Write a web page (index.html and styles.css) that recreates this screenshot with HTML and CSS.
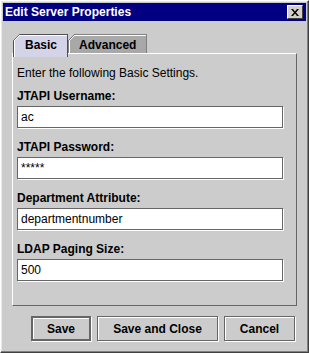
FILE: index.html
```html
<!DOCTYPE html>
<html lang="en-US">
<head>
	<meta charset="UTF-8">
	<title>Edit Server Properties</title>
	<link rel="stylesheet" href="styles.css">
</head>
<body>
	<div class="window">
		<div class="titlebar">
			<span class="title">Edit Server Properties</span>
			<span class="close-btn">
				<svg width="8" height="7" viewBox="0 0 8 7">
					<path d="M0 0 H2 L4 2.5 L6 0 H8 L5 3.5 L8 7 H6 L4 4.5 L2 7 H0 L3 3.5 Z" fill="#000"/>
				</svg>
			</span>
		</div>

		<div class="content">
			<div class="tabs">
				<div class="tab active">Basic</div>
				<div class="tab">Advanced</div>
			</div>

			<div class="panel">
				<p class="intro">Enter the following Basic Settings.</p>

				<div class="field">
					<label>JTAPI Username:</label>
					<div class="input">ac</div>
				</div>

				<div class="field">
					<label>JTAPI Password:</label>
					<div class="input pass">*****</div>
				</div>

				<div class="field">
					<label>Department Attribute:</label>
					<div class="input">departmentnumber</div>
				</div>

				<div class="field">
					<label>LDAP Paging Size:</label>
					<div class="input">500</div>
				</div>
			</div>

			<div class="buttons">
				<button class="btn default">Save</button>
				<button class="btn wide">Save and Close</button>
				<button class="btn mid">Cancel</button>
			</div>
		</div>
	</div>
</body>
</html>
```

FILE: styles.css
```css
body{
	margin: 0;
	font-family: "Liberation Sans", Arial, sans-serif;
	background-color: #cccccc;
}

.window{
	width: 309px;
	height: 353px;
	box-sizing: border-box;
	background-color: #cccccc;
	border: 1px solid #ffffff;
	border-right-color: #404040;
	border-bottom-color: #404040;
	box-shadow: inset -1px -1px 0 #808080, inset 1px 1px 0 #e8e8e8;
	padding: 2px;
}

.titlebar{
	height: 18px;
	background-color: #000080;
	display: flex;
	align-items: center;
	justify-content: space-between;
	padding: 0 3px 0 2px;
}

.title{
	color: #fff;
	font-weight: bold;
	font-size: 12px;
}

.close-btn{
	width: 16px;
	height: 14px;
	box-sizing: border-box;
	background-color: #d4d0c8;
	border: 1px solid #fff;
	border-right-color: #404040;
	border-bottom-color: #404040;
	display: flex;
	align-items: center;
	justify-content: center;
}

.content{
	padding: 13px 9px 0 9px;
}

.tabs{
	display: flex;
	height: 19px;
	padding-left: 1px;
	position: relative;
	z-index: 1;
}

.tab{
	position: relative;
	font-size: 12px;
	font-weight: bold;
	color: #000;
	border: 1px solid #808080;
	border-bottom: none;
	box-shadow: inset 1px 1px 0 #fff;
	background-color: #a8a8a8;
	padding: 3px 10px 0 10px;
}

/* cut top-left corner of the metal tabs */
.tab::before{
	content: "";
	position: absolute;
	top: -1px;
	left: -1px;
	width: 7px;
	height: 7px;
	background: linear-gradient(to bottom right, #cccccc 0, #cccccc calc(50% - 0.6px), #707070 calc(50% - 0.6px), #707070 calc(50% + 0.6px), #ffffff calc(50% + 0.6px), #ffffff calc(50% + 1.4px), transparent calc(50% + 1.4px));
}

.tab.active{
	background-color: #d4d4e8;
	border-color: #505050;
	height: 19px;
	padding: 3px 10px 0 11px;
}

.panel{
	height: 253px;
	box-sizing: border-box;
	border: 1px solid #fff;
	border-right-color: #666;
	border-bottom-color: #666;
	padding: 12px 13px 0 4px;
}

.intro{
	margin: 0 0 9px 0;
	font-size: 12px;
	line-height: 14px;
}

.field{
	margin-bottom: 12px;
}

.field label{
	display: block;
	font-size: 12px;
	font-weight: bold;
	line-height: 14px;
	margin-bottom: 3px;
}

.input{
	height: 22px;
	box-sizing: border-box;
	background-color: #fff;
	border: 1px solid #666;
	box-shadow: 1px 1px 0 #fff;
	font-size: 12px;
	line-height: 20px;
	padding-left: 3px;
}

.buttons{
	display: flex;
	justify-content: flex-end;
	gap: 6px;
	margin-top: 10px;
	padding-right: 2px;
}

.btn{
	height: 25px;
	font-family: "Liberation Sans", Arial, sans-serif;
	font-size: 12px;
	font-weight: bold;
	background-color: #cccccc;
	border: 1px solid #666;
	box-shadow: inset 1px 1px 0 #fff, 1px 1px 0 #fff;
	padding: 0;
	width: 71px;
}

.btn.default{
	width: 60px;
	border: 2px solid #666;
}

.btn.wide{
	width: 121px;
}
```
